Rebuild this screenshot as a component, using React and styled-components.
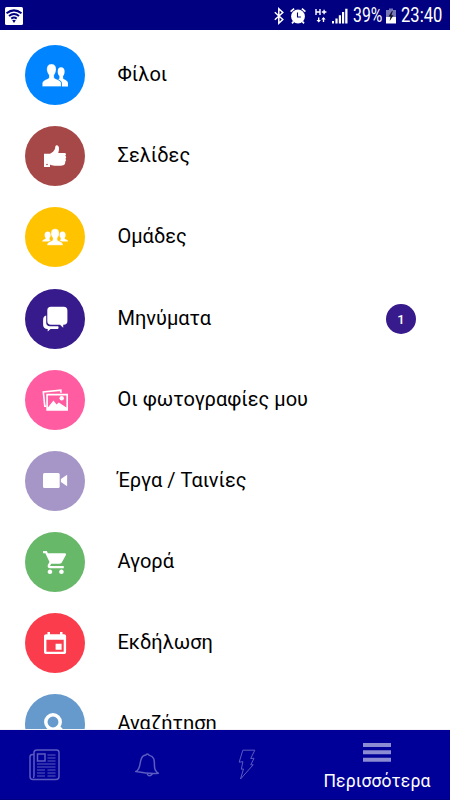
import React from "react";
import styled, { createGlobalStyle } from "styled-components";

const GlobalStyle = createGlobalStyle`
  * {
    box-sizing: border-box;
  }
  body {
    margin: 0;
    font-family: Roboto, "Noto Sans", sans-serif;
    background: #fff;
  }
`;

const Screen = styled.div`
  width: 450px;
  height: 800px;
  display: flex;
  flex-direction: column;
  overflow: hidden;
`;

const StatusBar = styled.header`
  height: 30px;
  flex: none;
  display: flex;
  align-items: center;
  background: #000080;
  color: #fff;
  padding: 1px 8px 0 5px;
`;

const StatusIcon = styled.svg`
  display: block;
  flex: none;
  width: ${(p) => p.$w}px;
  height: 18px;
  margin-right: ${(p) => p.$gap || 0}px;
`;

const Spacer = styled.div`
  flex: 1;
`;

const StatusText = styled.span`
  width: ${(p) => p.$w}px;
  margin-right: ${(p) => p.$gap || 0}px;
  font-size: 19.5px;
  line-height: 28px;
  white-space: nowrap;
  transform: scaleX(${(p) => p.$squeeze});
  transform-origin: left center;
`;

const List = styled.main`
  flex: 1;
  min-height: 0;
  overflow: hidden;
  padding-top: 4.4px;
  border-bottom: 1px solid #f3f3f8;
`;

const Row = styled.div`
  height: 81.2px;
  display: flex;
  align-items: center;
  padding: 0 34px 0 25px;
`;

const Circle = styled.div`
  width: 60px;
  height: 60px;
  flex: none;
  border-radius: 50%;
  background: ${(p) => p.$color};
  color: ${(p) => p.$color};
`;

const Glyph = styled.svg`
  display: block;
  width: 60px;
  height: 60px;
  fill: #fff;
`;

const Label = styled.span`
  flex: 1;
  margin-left: 32.5px;
  padding-bottom: 2px;
  font-size: 20px;
  line-height: 24px;
  color: #000;
`;

const Badge = styled.span`
  width: 30px;
  height: 30px;
  border-radius: 50%;
  background: #371a8b;
  color: #fff;
  font-size: 13px;
  font-weight: 500;
  line-height: 31px;
  text-align: center;
`;

const TabBar = styled.nav`
  height: 70px;
  flex: none;
  display: flex;
  background: #000099;
  border-bottom: 1px solid #000080;
`;

const Tab = styled.div`
  width: ${(p) => p.$w}px;
  flex: none;
  display: flex;
  flex-direction: column;
  align-items: center;
  justify-content: center;
`;

const ActiveTab = styled(Tab)`
  justify-content: flex-start;
  padding: 12px 0 0 13px;
`;

const TabIcon = styled.svg`
  display: block;
  fill: none;
  stroke: #5b5bc0;
  stroke-width: 1.5;
`;

const TabLabel = styled.span`
  margin-top: 8px;
  font-size: 17.5px;
  line-height: 22px;
  letter-spacing: 0.15px;
  color: #fff;
`;

const icons = {
  friends: (
    <>
      <path d="M36 22.3c2.4 0 3.7 1.6 3.6 4.2 0 2.2-.7 3.5-1.5 4.5v2.2c.2 1.4 4.9 1.8 4.9 5v3.3h-6v-2.5c0-2.5-1.8-3.6-4-4.7 1-.5 1.4-.8 1.4-1.4V31c-1-1-1.7-2.7-1.7-4.6 0-2.5 1.2-4.1 3.3-4.1z" />
      <path
        d="M26.4 19c3.200 0 4.800 2 4.700 5.200 0 2.600-.9 4.500-2 5.700v2.500c.3 1.900 7.100 2 7.100 6.200v2.900H17.300v-2.900c0-4.200 6.400-4.300 6.700-6.200v-2.500c-1.100-1.200-2.200-3.100-2.200-5.700 0-3.200 1.600-5.200 4.600-5.200z"
        stroke="currentColor"
        strokeWidth=".3"
      />
    </>
  ),
  pages: (
    <>
      <path d="M19 27.7h6c2.2-1.2 4.2-2.8 5-5 .3-1 .1-3.4 1.5-3.4 1.8 0 2.8 1.8 2.5 4-.1 1.6-.7 2.9-.7 3.7h6.2c1.7 0 2 2 .7 2.7 1.4.6 1.2 2.7.1 3.1 1.1.8.8 2.5-.3 3 .7 1.5-.2 3-1.8 3.4-2.7.8-8.7.8-11.3 0-.8-.2-1.4-.6-1.9-.8V41h-6z" />
      <circle cx="22" cy="38.5" r=".8" fill="currentColor" />
    </>
  ),
  groups: (
    <>
      <path d="M22.7 24.4c2 0 3 1.3 3 3.3 0 1.5-.5 2.6-1.2 3.3v1.4l1.3.8-2.3 1.3h-6.2c0-2.3 3.4-1.9 3.4-3.5-.7-.8-1.1-1.8-1.1-3.3 0-2 1.1-3.3 3.1-3.3zM37.5 24.4c-2 0-3 1.3-3 3.3 0 1.5.5 2.6 1.2 3.3v1.4l-1.3.8 2.3 1.3H43c0-2.3-3.5-1.9-3.5-3.5.7-.8 1.1-1.8 1.1-3.3 0-2-1.1-3.3-3.1-3.3z" />
      <path
        d="M30.1 21.8c2.9 0 4.200 1.8 4.100 4.500 0 2.100-.8 3.500-1.800 4.600v2c.4 1.400 5.700 1.400 5.700 5.400H22c0-4 5.500-4 5.800-5.400v-2c-1-1.100-1.800-2.500-1.800-4.600-.1-2.700 1.300-4.500 4.100-4.500z"
        stroke="currentColor"
        strokeWidth=".3"
      />
    </>
  ),
  messages: (
    <>
      <path d="M21.2 26.5v7.2c0 2.2 1.5 3.5 3.7 3.5h8.3c.8 1.4.4 2.9-1.4 2.9h-6.3l-2.8 2.4v-2.5c-3-.1-4.600-1.600-4.600-4.300v-4.800c0-2.400 1-4.100 3.100-4.400z" />
      <path d="M26 17.7h12.700c2.400 0 3.700 1.300 3.700 3.700V32c0 2.600-1.300 3.700-3.700 3.800h-.5v2.900L35 35.800h-9c-2.500 0-3.700-1.300-3.700-3.800V21.400c0-2.400 1.200-3.700 3.700-3.700z" />
    </>
  ),
  photos: (
    <>
      <path
        d="M21.3 36.300l-1.500-.1-1.500-14.300 17.500-1.700.2 2.500"
        fill="none"
        stroke="#fff"
        strokeWidth="1.600"
      />
      <path
        d="M21.3 23.800H43v16.900H21.300zM22.900 25.400v12l5.500-7 3.200 4.100 2.200-2 7.600 5V25.400z"
        fillRule="evenodd"
      />
      <circle cx="36.700" cy="28.300" r="2.200" />
    </>
  ),
  video: (
    <>
      <rect x="18" y="22" width="16.7" height="15" rx="1.5" />
      <path d="M35.9 28l6.2-4.3v11.6L35.9 31z" />
    </>
  ),
  market: (
    <g transform="translate(16.9 16.7) scale(1.15)">
      <path d="M7 18c-1.1 0-1.99.9-1.99 2S5.900 22 7 22s2-.9 2-2-.9-2-2-2zM1 2v2h2l3.600 7.590-1.350 2.450c-.16.280-.25.610-.25.960 0 1.100.9 2 2 2h12v-2H7.420c-.14 0-.25-.11-.25-.25l.030-.12.900-1.630h7.450c.75 0 1.410-.41 1.750-1.030l3.580-6.490A1 1 0 0 0 20 4H5.210l-.94-2H1zm16 16c-1.100 0-1.990.9-1.990 2s.89 2 1.990 2 2-.9 2-2-.9-2-2-2z" />
    </g>
  ),
  event: (
    <path
      fillRule="evenodd"
      d="M22.500 19h2.500v2.200h10V19h2.500v2.200H39c1.300 0 2.100.8 2.100 2.100v15.600c0 1.300-.8 2.100-2.100 2.100H21.200c-1.300 0-2.200-.8-2.200-2.100V23.300c0-1.300.9-2.100 2.200-2.100h1.300zM21.400 26.700v12h17.300v-12zM30.600 30.700h6v6h-6z"
    />
  ),
  search: (
    <>
      <circle cx="28" cy="28" r="7.200" fill="none" stroke="#fff" strokeWidth="3.500" />
      <path d="M33 33l8 8" stroke="#fff" strokeWidth="4" />
    </>
  ),
};

const items = [
  { icon: "friends", color: "#0084ff", label: "Φίλοι" },
  { icon: "pages", color: "#a74848", label: "Σελίδες" },
  { icon: "groups", color: "#ffc300", label: "Ομάδες" },
  { icon: "messages", color: "#371a8b", label: "Μηνύματα", count: 1 },
  { icon: "photos", color: "#ff5ca1", label: "Οι φωτογραφίες μου" },
  { icon: "video", color: "#a695c7", label: "Έργα / Ταινίες" },
  { icon: "market", color: "#67b868", label: "Αγορά" },
  { icon: "event", color: "#fa3c4c", label: "Εκδήλωση" },
  { icon: "search", color: "#6699cc", label: "Αναζήτηση" },
];

function Status() {
  return (
    <StatusBar>
      <StatusIcon $w={18} viewBox="0 0 18 18">
        <rect width="18" height="18" rx="1.500" fill="#fff" />
        <g fill="none" stroke="#000080" strokeWidth="2">
          <path d="M1.500 6.200Q9 .5 16.500 6.200M4 9Q9 5 14 9M6.300 11.600Q9 9.600 11.700 11.600" />
        </g>
        <path d="M7.200 13.300Q9 12.100 10.800 13.300L9 16z" fill="#000080" />
      </StatusIcon>
      <Spacer />
      <StatusIcon $w={10} $gap={6} viewBox="0 0 10 18">
        <path
          d="M.8 5.300l8 7.200-4 3.700V1.800l4 3.700-8 7.200"
          fill="none"
          stroke="#fff"
          strokeWidth="1.500"
        />
      </StatusIcon>
      <StatusIcon $w={16} $gap={9} viewBox="0 0 16 18">
        <circle cx="8" cy="9.500" r="6.900" fill="#fff" />
        <path
          d="M.6 4.700l3.500-3M15.400 4.700l-3.500-3M3.500 14.700L2 16.300M12.500 14.700l1.500 1.600"
          stroke="#fff"
          strokeWidth="1.700"
        />
        <path d="M7.500 5.500v4.500h3.400" fill="none" stroke="#000080" strokeWidth="1.100" />
      </StatusIcon>
      <StatusIcon $w={12} $gap={5} viewBox="0 0 12 18">
        <path
          d="M1 2v6M5 2v6M1 5h4M6.800 5h4.600M9.100 2.800v4.500M3.700 10.500v4M8.500 11v4"
          stroke="#fff"
          strokeWidth="1.400"
        />
        <path d="M1.500 13h4.400l-2.200 2.600zM6.300 12.500h4.400l-2.200-2.600z" fill="#fff" />
      </StatusIcon>
      <StatusIcon $w={16} $gap={5} viewBox="0 0 16 18">
        <path
          d="M0 14h2v2.500H0zM3.400 11.500h2.200v5H3.400zM6.800 8.300H9v8.200H6.800zM10 5h2.200v11.500H10zM13.200 1.800h2.300v14.700h-2.300z"
          fill="#fff"
        />
      </StatusIcon>
      <StatusText $w={29} $gap={4} $squeeze={0.81}>
        39%
      </StatusText>
      <StatusIcon $w={10} $gap={5} viewBox="0 0 10 18">
        <path d="M3 1.500h4v1.500h3v7H0V3h3z" fill="#7777b8" />
        <path d="M0 10h10v6.500H0z" fill="#fff" />
        <path d="M6 4L2.500 9.500h2L3.700 14 7.500 8.200H5.400L6.800 4z" fill="#111122" />
      </StatusIcon>
      <StatusText $w={41} $squeeze={0.85}>
        23:40
      </StatusText>
    </StatusBar>
  );
}

function Tabs() {
  return (
    <TabBar>
      <Tab $w={90}>
        <TabIcon width="32" height="32" viewBox="0 0 32 32">
          <path d="M5 5.500H3.500Q1 5.500 1 8v19.500Q1 30.500 4 30.500h23q3 0 3-3V3.500Q30 1 27.500 1H8Q5 1 5 3.500v23q0 2-1 2" />
          <rect x="8.500" y="5" width="7.500" height="7" />
          <path
            strokeWidth="1.200"
            d="M18.500 6h8M18.500 9h8M18.500 12h8M8 15h18.500M8 18h18.500M8 21h8M18.500 21h8M8 24h8M18.500 24h8M8 27h8M18.500 27h8"
          />
        </TabIcon>
      </Tab>
      <Tab $w={113}>
        <TabIcon width="24" height="26" viewBox="0 0 24 26">
          <path d="M1 19.500C7 17 3.500 5.500 9 3.500Q10.200 3 11 2.900q1.500-2 3 .2C23 5.500 17 14.500 21 19q.8 1.500 2.200 2.200-8 1-22.200-1.700z" />
          <path d="M12 21.500q2 4.500 5.500.3" />
        </TabIcon>
      </Tab>
      <Tab $w={88}>
        <TabIcon width="18" height="32" viewBox="0 0 18 32">
          <path
            strokeWidth="1"
            d="M4.800 1.200h12L12.700 9.500l3.300-.2-3.200 6.500h2.400L2.500 30l3-10-2.200.2 1.600-7.500-3.700.5z"
          />
        </TabIcon>
      </Tab>
      <ActiveTab $w={159}>
        <TabIcon width="28" height="20" viewBox="0 0 28 20">
          <path d="M0 3h28M0 10.300h28M0 17.700h28" stroke="#8c8cd2" strokeWidth="4" />
        </TabIcon>
        <TabLabel>Περισσότερα</TabLabel>
      </ActiveTab>
    </TabBar>
  );
}

function App() {
  return (
    <>
      <GlobalStyle />
      <Screen>
        <Status />
        <List>
          {items.map((item) => (
            <Row key={item.icon}>
              <Circle $color={item.color}>
                <Glyph viewBox="0 0 60 60">{icons[item.icon]}</Glyph>
              </Circle>
              <Label>{item.label}</Label>
              {item.count && <Badge>{item.count}</Badge>}
            </Row>
          ))}
        </List>
        <Tabs />
      </Screen>
    </>
  );
}

export default App;
